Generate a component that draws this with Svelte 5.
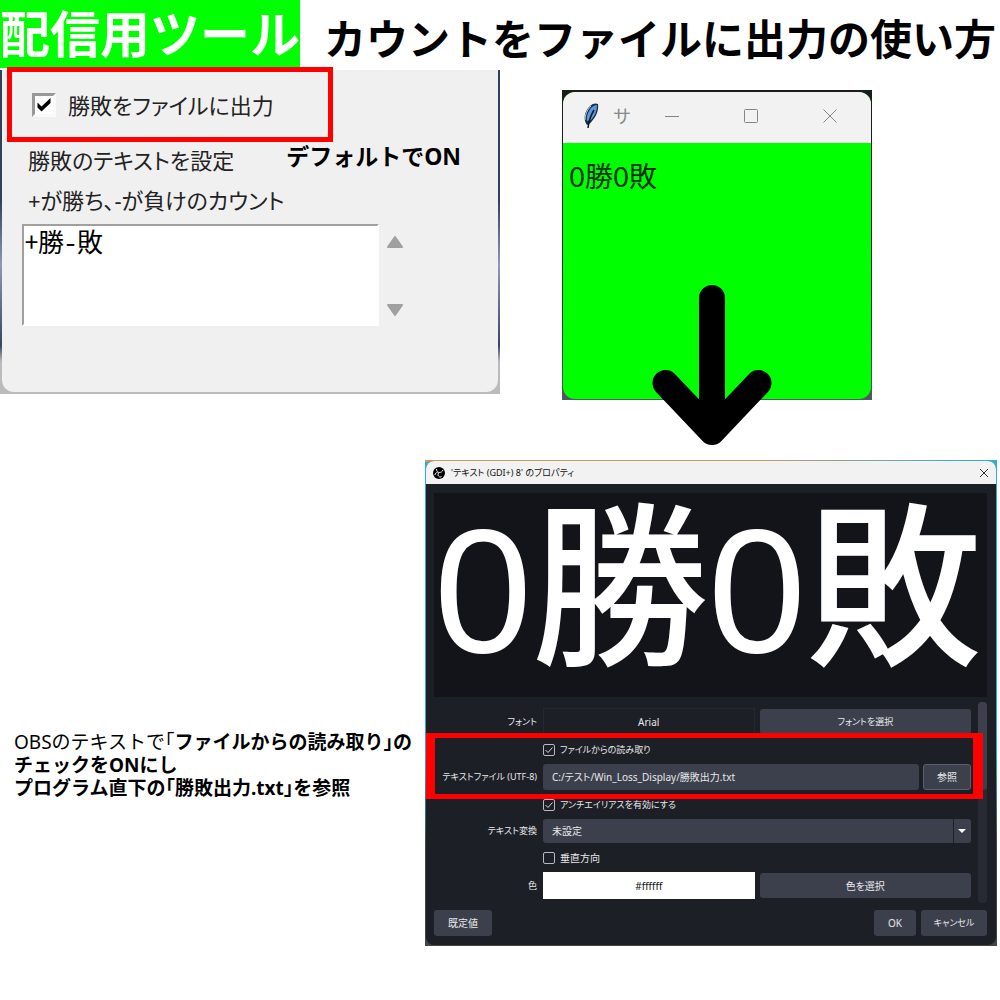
<script>
let writeToFile = true;
let resultFormat = "+勝-敗";

let readFromFile = true;
let filePath = "C:/テスト/Win_Loss_Display/勝敗出力.txt";
let antialias = true;
let vertical = false;
let transform = "未設定";

const transforms = ["未設定", "大文字", "小文字"];
</script>

<div class="page">
	<header>
		<strong class="brand">配信用ツール</strong>
		<h1>カウントをファイルに出力の使い方</h1>
	</header>

	<div class="top">
		<section class="settings">
			<div class="settings-inner">
				<label class="write-option">
					<span class="tick classic">
						<input type="checkbox" bind:checked={writeToFile} />
						{#if writeToFile}
						<svg viewBox="0 0 16 16"><path d="M1.500 5.500v5l4 4L14.500 6V1L5.500 9.500z" /></svg>
						{/if}
					</span>
					勝敗をファイルに出力
				</label>
				<div class="format-head">
					<label for="format">勝敗のテキストを設定</label>
					<strong>デフォルトでON</strong>
				</div>
				<p class="hint">+が勝ち、-が負けのカウント</p>
				<div class="format-row">
					<textarea id="format" bind:value={resultFormat}></textarea>
					<div class="spin">
						<button aria-label="上へ"><svg viewBox="0 0 18 14"><path d="M9 2L16 12H2z" /></svg></button>
						<button aria-label="下へ"><svg viewBox="0 0 18 14"><path d="M9 12L2 2H16z" /></svg></button>
					</div>
				</div>
			</div>
		</section>

		<section class="counter">
			<div class="counter-frame">
				<div class="counter-bar">
					<svg class="feather" viewBox="0 0 16 26">
						<path d="M4 22C0 17 1 9 7 3C10 0 13 0 15 1C16 7 13 14 9 18C8 20 6 21 4 22z" fill="#1d2c40" />
						<path d="M4 18C3 14 5 9 8 5C10 3 12 2 14 2C14 8 12 13 8 17z" fill="#5b97dc" />
						<path d="M2 17C2 12 4 7 8 3" stroke="#c8d8e4" stroke-width="1" fill="none" />
						<path d="M11 7C8 12 6 16 5 25" stroke="#121820" stroke-width="1.500" fill="none" />
					</svg>
					<span class="counter-name">サ</span>
					<button aria-label="最小化"><svg viewBox="0 0 16 16"><path d="M1 8.500H15" /></svg></button>
					<button aria-label="最大化"><svg viewBox="0 0 16 16"><rect x="1.5" y="1.5" width="13" height="13" rx="1" /></svg></button>
					<button aria-label="閉じる"><svg viewBox="0 0 16 16"><path d="M1.500 1.500L14.500 14.500M14.500 1.500L1.500 14.500" /></svg></button>
				</div>
				<div class="counter-body">0勝0敗</div>
			</div>
			<svg class="arrow" viewBox="0 0 120 160"><path d="M60 13V147M13.500 98L60 147L106.500 98" /></svg>
		</section>
	</div>

	<div class="bottom">
		<p class="note">
			OBSのテキストで「<b>ファイルからの読み取り」の<br />
			チェックをONにし<br />
			プログラム直下の「勝敗出力.txt」を参照</b>
		</p>

		<section class="dialog">
			<div class="dialog-inner">
				<div class="dialog-bar">
					<svg class="obs" viewBox="0 0 24 24">
						<circle cx="12" cy="12" r="12" fill="#000" />
						<path d="M7 4C7 8 9 11 13 11C16 11 19 9 20 6M13 11C10 12 9 16 11 18C13 21 16 20 17 19M9 11C6 11 4 13 4 16" fill="none" stroke="#eee" stroke-width="2" />
					</svg>
					<h2>'テキスト (GDI+) 8' のプロパティ</h2>
					<button aria-label="閉じる"><svg viewBox="0 0 10 10"><path d="M1 1L9 9M9 1L1 9" /></svg></button>
				</div>

				<div class="preview">0勝0敗</div>

				<div class="scroll">
					<div class="form">
						<span class="name">フォント</span>
						<div class="pair">
							<output class="font-name">Arial</output>
							<button class="kana">フォントを選択</button>
						</div>

						<label class="check kana">
							<span class="tick"><input type="checkbox" bind:checked={readFromFile} />
							{#if readFromFile}<svg viewBox="0 0 12 12"><path d="M2.500 6L5 8.500L9.500 3.500" /></svg>{/if}</span>
							ファイルからの読み取り
						</label>

						<label class="name" for="path">テキストファイル (UTF-8)</label>
						<div class="file">
							<input id="path" type="text" bind:value={filePath} />
							<button class="browse">参照</button>
						</div>

						<label class="check kana">
							<span class="tick"><input type="checkbox" bind:checked={antialias} />
							{#if antialias}<svg viewBox="0 0 12 12"><path d="M2.500 6L5 8.500L9.500 3.500" /></svg>{/if}</span>
							アンチエイリアスを有効にする
						</label>

						<label class="name" for="transform">テキスト変換</label>
						<div class="select">
							<select id="transform" bind:value={transform}>
								{#each transforms as item}
								<option value={item}>{item}</option>
								{/each}
							</select>
							<svg viewBox="0 0 18 24"><path d="M0.500 0V24" stroke="#1e2028" /><path d="M5 10H13L9 14z" fill="#fff" /></svg>
						</div>

						<label class="check">
							<span class="tick"><input type="checkbox" bind:checked={vertical} />
							{#if vertical}<svg viewBox="0 0 12 12"><path d="M2.500 6L5 8.500L9.500 3.500" /></svg>{/if}</span>
							垂直方向
						</label>

						<span class="name">色</span>
						<div class="pair">
							<output class="color">#ffffff</output>
							<button>色を選択</button>
						</div>
					</div>
					<div class="track"><div class="thumb"></div></div>
					<div class="highlight"></div>
				</div>

				<footer>
					<button class="defaults">既定値</button>
					<button>OK</button>
					<button class="cancel kana">キャンセル</button>
				</footer>
			</div>
		</section>
	</div>
</div>

<style>
	:global(body) {
		background: #fff;
	}

	.page {
		font-family: "Noto Sans", "Noto Sans CJK JP", sans-serif;
		color: #000;
		overflow: hidden;
	}

	h1, h2, p {
		margin: 0;
	}

	button, input, select, textarea {
		font: inherit;
		color: inherit;
		margin: 0;
		box-sizing: border-box;
		font-feature-settings: inherit;
	}

	button {
		border: 0;
		padding: 0;
		background: none;
	}

	header {
		display: flex;
		align-items: center;
		height: 68px;
		white-space: nowrap;
	}

	.brand {
		background: #00ff00;
		color: #fff;
		font-size: 50px;
		line-height: 68px;
	}

	h1 {
		margin-left: 24px;
		padding-top: 10px;
		font-size: 42px;
		line-height: 58px;
	}

	.top {
		display: grid;
		grid-template-columns: 50% 31%;
		column-gap: 6.2%;
		align-items: start;
		padding-top: 2px;
	}

	.settings {
		padding: 0 2px 2px;
		background: linear-gradient(#33405a 40%, #8e98b0 60%, #3a4560 85%, #bbb 90%);
	}

	.settings-inner {
		display: flow-root;
		box-sizing: border-box;
		min-height: 322px;
		padding: 0 0 0 20px;
		background: #f0f0f0;
		border-radius: 0 0 12px 12px;
		font-size: 22px;
		line-height: 36px;
		font-feature-settings: "palt";
		color: #222;
	}

	.write-option {
		display: flex;
		align-items: center;
		gap: 12px;
		box-sizing: border-box;
		width: 326px;
		height: 75px;
		margin: -3px 0 0 -15px;
		padding-left: 20px;
		border: 5px solid #f00;
		position: relative;
	}

	.tick {
		display: grid;
		position: relative;
	}

	.tick input {
		appearance: none;
		width: 12px;
		height: 12px;
		border: 1px solid #b8bac0;
		border-radius: 2px;
	}

	.tick svg {
		position: absolute;
		inset: 0;
		fill: none;
		stroke: #d8d8dc;
		stroke-width: 1;
		pointer-events: none;
	}

	.classic input {
		width: 24px;
		height: 24px;
		background: #fff;
		border: 3px solid #999;
		border-right-color: #fafafa;
		border-bottom-color: #fafafa;
		border-radius: 0;
	}

	.classic svg {
		inset: 4px;
		fill: #000;
		stroke: none;
	}

	.format-head {
		display: flex;
		gap: 52px;
		padding: 0 0 0 6px;
	}

	.format-head strong {
		font-size: 23px;
		line-height: 28px;
		font-feature-settings: normal;
		color: #000;
	}

	.hint {
		padding: 4px 0 0 6px;
	}

	.format-row {
		display: flex;
		gap: 7px;
		margin-top: 6px;
	}

	textarea {
		display: block;
		width: 357px;
		height: 102px;
		padding: 0 0 0 1px;
		border: 2px solid #fff;
		border-top-color: #a0a0a0;
		border-left-color: #a0a0a0;
		background: #fff;
		resize: none;
		overflow: hidden;
		font-family: "Noto Sans CJK JP", sans-serif;
		font-size: 26px;
		line-height: 30px;
		font-feature-settings: "hwid";
		color: #000;
	}

	.spin {
		display: flex;
		flex-direction: column;
		justify-content: space-between;
		padding: 11px 0 9px;
	}

	.spin button {
		display: flex;
	}

	.spin svg {
		width: 18px;
		height: 14px;
		fill: #a0a0a0;
		stroke: #a0a0a0;
		stroke-width: 2;
		stroke-linejoin: round;
	}

	.counter {
		position: relative;
		margin-top: 20px;
		padding: 2px 1px 1px;
		background: linear-gradient(#1c1c1c 50%, #4e5a60);
	}

	.counter-frame {
		border-radius: 12px;
		overflow: hidden;
		background: #00ff00;
	}

	.counter-bar {
		box-sizing: border-box;
		display: flex;
		height: 51px;
		padding: 0 2px 3px 0;
		background: #f2f2f2;
	}

	.counter-bar button {
		flex: 0 0 79px;
	}

	.counter-bar button svg {
		display: block;
		width: 16px;
		height: 16px;
		margin: 0 auto;
		fill: none;
		stroke: #858585;
		stroke-width: 1;
	}

	.feather {
		width: 16px;
		height: 26px;
		margin: 11px 0 0 20px;
	}

	.counter-name {
		flex: 1;
		padding-left: 14px;
		font-size: 18px;
		line-height: 48px;
		color: #888;
	}

	.counter-body {
		min-height: 230px;
		padding: 13px 6px;
		font-size: 28px;
		line-height: 40px;
		color: #053005;
	}

	.arrow {
		position: absolute;
		left: 29%;
		top: 195px;
		width: 120px;
		height: 160px;
		fill: none;
		stroke: #000;
		stroke-width: 26;
		stroke-linecap: round;
		stroke-linejoin: round;
	}

	.bottom {
		display: grid;
		grid-template-columns: 42.5% 57.2%;
		align-items: start;
		padding: 60px 0;
	}

	.note {
		align-self: center;
		padding: 124px 0 0 14px;
		font-size: 19px;
		line-height: 23px;
		white-space: nowrap;
		font-feature-settings: "halt";
	}

	.dialog {
		padding: 1px;
		background: linear-gradient(90deg, #c49a6c 60%, #2aaede) top / 100% 2px no-repeat, linear-gradient(#2aaede 60%, #444 80%);
	}

	.dialog-inner {
		border-radius: 8px;
		overflow: hidden;
		background: #1d1f26;
		color: #e8e8ea;
		font-size: 10px;
		line-height: 16px;
		font-feature-settings: "palt";
	}

	.dialog-bar {
		display: flex;
		align-items: center;
		gap: 6px;
		height: 23px;
		padding: 0 7px;
		background: #f2f2f2;
		color: #111;
	}

	.obs {
		width: 12px;
		height: 12px;
	}

	h2 {
		flex: 1;
		font-size: 9px;
		font-weight: 400;
	}

	.kana {
		font-size: 9px;
	}

	.dialog-bar button {
		display: flex;
	}

	.dialog-bar button svg {
		width: 10px;
		height: 10px;
		fill: none;
		stroke: #333;
	}

	.preview {
		height: 204px;
		margin: 9px 9px 5px 8px;
		background: #131419;
		color: #fff;
		font-family: "Liberation Sans", "Noto Sans CJK JP", sans-serif;
		font-size: 176px;
		font-weight: 500;
		line-height: 196px;
		white-space: nowrap;
		font-feature-settings: normal;
	}

	.scroll {
		display: flex;
		gap: 7px;
		padding: 0 9px 0 8px;
		position: relative;
	}

	.form {
		flex: 1;
		display: grid;
		grid-template-columns: 103px 1fr;
		column-gap: 6px;
		row-gap: 7px;
		align-items: center;
		padding: 6px 0 4px;
	}

	.name {
		font-size: 9px;
		text-align: right;
		white-space: nowrap;
	}

	.check {
		grid-column: 2;
		display: flex;
		align-items: center;
		gap: 5px;
		height: 15px;
	}

	.pair {
		display: grid;
		grid-template-columns: 1fr 1fr;
		gap: 5px;
		height: 27px;
	}

	.pair output {
		display: flex;
		align-items: center;
		justify-content: center;
	}

	.font-name {
		border: 1px solid #262830;
	}

	.color {
		background: #fff;
		color: #111;
	}

	.form button, footer button, .file input, select {
		background: #3c404d;
		border-radius: 3px;
	}

	.pair button {
		margin: 1px 0;
	}

	.file {
		display: flex;
		gap: 4px;
		height: 26px;
	}

	.file input {
		flex: 1;
		min-width: 0;
		padding: 0 9px;
		border: 0;
	}

	.file .browse {
		width: 48px;
		border: 1px solid #5b6070;
	}

	.select {
		position: relative;
		height: 24px;
	}

	select {
		appearance: none;
		display: block;
		width: 100%;
		height: 100%;
		padding: 0 9px;
		border: 0;
	}

	.select svg {
		position: absolute;
		right: 0;
		top: 0;
		width: 18px;
		height: 24px;
		pointer-events: none;
	}

	.track {
		width: 9px;
		border-radius: 4px;
		background: #272a33;
	}

	.thumb {
		height: 44%;
		border-radius: 4px;
		background: #3c404d;
	}

	/* frame around the file rows, over the scroll bar */
	.highlight {
		position: absolute;
		left: -1px;
		right: 13px;
		top: 31px;
		height: 56px;
		border: solid #f00;
		border-width: 5px 10px;
		pointer-events: none;
	}

	footer {
		display: flex;
		gap: 5px;
		padding: 7px 9px 9px 8px;
	}

	footer button {
		width: 42px;
		height: 26px;
	}

	footer .defaults {
		width: 58px;
		margin-right: auto;
	}

	footer .cancel {
		width: 66px;
	}
</style>
